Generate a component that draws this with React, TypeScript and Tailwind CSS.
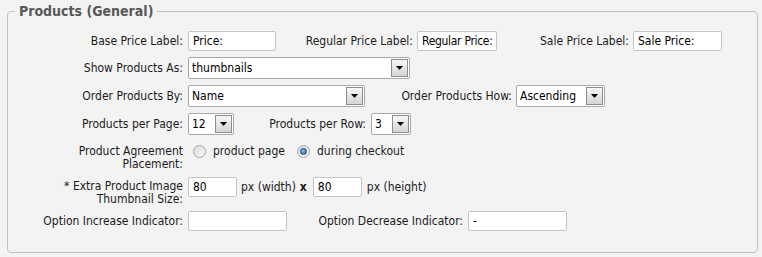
import React from "react";

const font = { fontFamily: '"DejaVu Sans Condensed", "Liberation Sans", sans-serif' };

function TextBox({ w, value, extra = "" }: { w: string; value: string; extra?: string }) {
  return (
    <div className={`${w} ${extra} h-[20px] bg-white border border-[#c4c4c4] rounded-[2px] flex items-center pl-[4px] text-black whitespace-nowrap overflow-hidden`}>
      {value}
    </div>
  );
}

function Select({ w, value }: { w: string; value: string }) {
  return (
    <div className={`${w} h-[22px] bg-white border border-[#a9a9a9] rounded-[2px] flex items-center`}>
      <span className="flex-1 pl-[3px] text-black whitespace-nowrap">{value}</span>
      <span className="w-[17px] h-[18px] mr-[1px] border border-[#8c8c8c] bg-gradient-to-b from-[#f7f7f7] to-[#d4d4d4] flex items-center justify-center">
        <svg width="7" height="4" viewBox="0 0 7 4">
          <path d="M0 0H7L3.5 4Z" fill="#000" />
        </svg>
      </span>
    </div>
  );
}

function Radio({ checked }: { checked?: boolean }) {
  return (
    <span className="w-[13px] h-[13px] shrink-0 rounded-full border border-[#a7a7a7] bg-gradient-to-br from-[#d9d9d9] to-[#fbfbfb] flex items-center justify-center">
      {checked ? (
        <span className="w-[7px] h-[7px] rounded-full border border-[#1d3f66] bg-[radial-gradient(circle_at_40%_40%,#7ec4f5,#1e64a8)]" />
      ) : null}
    </span>
  );
}

export default function App() {
  return (
    <div className="w-[762px] h-[257px] bg-[#f3f3f3] pl-[7px] pt-[3px] text-[12px] leading-[13px] text-[#1b1b1b]" style={font}>
      <fieldset className="w-[751px] border border-[#c2c2c2] rounded-[4px] pb-[21px]">
        <legend className="ml-[7px] px-[4px] text-[14px] leading-[16px] font-bold text-[#585858]">
          Products (General)
        </legend>

        {/* Row 1 */}
        <div className="flex items-center h-[20px] mt-[12px] whitespace-nowrap">
          <div className="w-[175px] text-right">Base Price Label:</div>
          <div className="ml-[5px]"><TextBox w="w-[88px]" value="Price:" /></div>
          <div className="w-[137px] text-right">Regular Price Label:</div>
          <div className="ml-[4px]"><TextBox w="w-[80px]" value="Regular Price:" extra="tracking-[-0.3px]" /></div>
          <div className="w-[132px] text-right">Sale Price Label:</div>
          <div className="ml-[4px]"><TextBox w="w-[89px]" value="Sale Price:" /></div>
        </div>

        {/* Row 2 */}
        <div className="flex items-center h-[22px] mt-[6px] whitespace-nowrap">
          <div className="w-[175px] text-right">Show Products As:</div>
          <div className="ml-[5px]"><Select w="w-[222px]" value="thumbnails" /></div>
        </div>

        {/* Row 3 */}
        <div className="flex items-center h-[22px] mt-[6px] whitespace-nowrap">
          <div className="w-[175px] text-right">Order Products By:</div>
          <div className="ml-[5px]"><Select w="w-[177px]" value="Name" /></div>
          <div className="w-[147px] text-right">Order Products How:</div>
          <div className="ml-[4px]"><Select w="w-[89px]" value="Ascending" /></div>
        </div>

        {/* Row 4 */}
        <div className="flex items-center h-[22px] mt-[6px] whitespace-nowrap">
          <div className="w-[175px] text-right">Products per Page:</div>
          <div className="ml-[5px]"><Select w="w-[46px]" value="12" /></div>
          <div className="w-[132px] text-right">Products per Row:</div>
          <div className="ml-[5px]"><Select w="w-[40px]" value="3" /></div>
        </div>

        {/* Row 5 */}
        <div className="flex items-start mt-[10px]">
          <div className="w-[175px] text-right">
            Product Agreement
            <br />
            Placement:
          </div>
          <div className="ml-[10px] flex items-center h-[13px]">
            <Radio />
            <span className="ml-[7px] w-[84px] whitespace-nowrap">product page</span>
            <Radio checked />
            <span className="ml-[7px] whitespace-nowrap">during checkout</span>
          </div>
        </div>

        {/* Row 6 */}
        <div className="flex items-start mt-[6px]">
          <div className="w-[175px] text-right pt-[3px]">
            * Extra Product Image
            <br />
            Thumbnail Size:
          </div>
          <div className="ml-[5px] flex items-center">
            <TextBox w="w-[49px]" value="80" />
            <span className="ml-[4px] whitespace-nowrap">px (width)</span>
            <span className="ml-[4px] font-bold">x</span>
            <span className="ml-[6px]"><TextBox w="w-[49px]" value="80" /></span>
            <span className="ml-[5px] whitespace-nowrap">px (height)</span>
          </div>
        </div>

        {/* Row 7 */}
        <div className="flex items-center h-[20px] mt-[5px] whitespace-nowrap">
          <div className="w-[175px] text-right">Option Increase Indicator:</div>
          <div className="ml-[5px]"><TextBox w="w-[99px]" value="" /></div>
          <div className="w-[176px] text-right">Option Decrease Indicator:</div>
          <div className="ml-[5px]"><TextBox w="w-[99px]" value="-" /></div>
        </div>
      </fieldset>
    </div>
  );
}
